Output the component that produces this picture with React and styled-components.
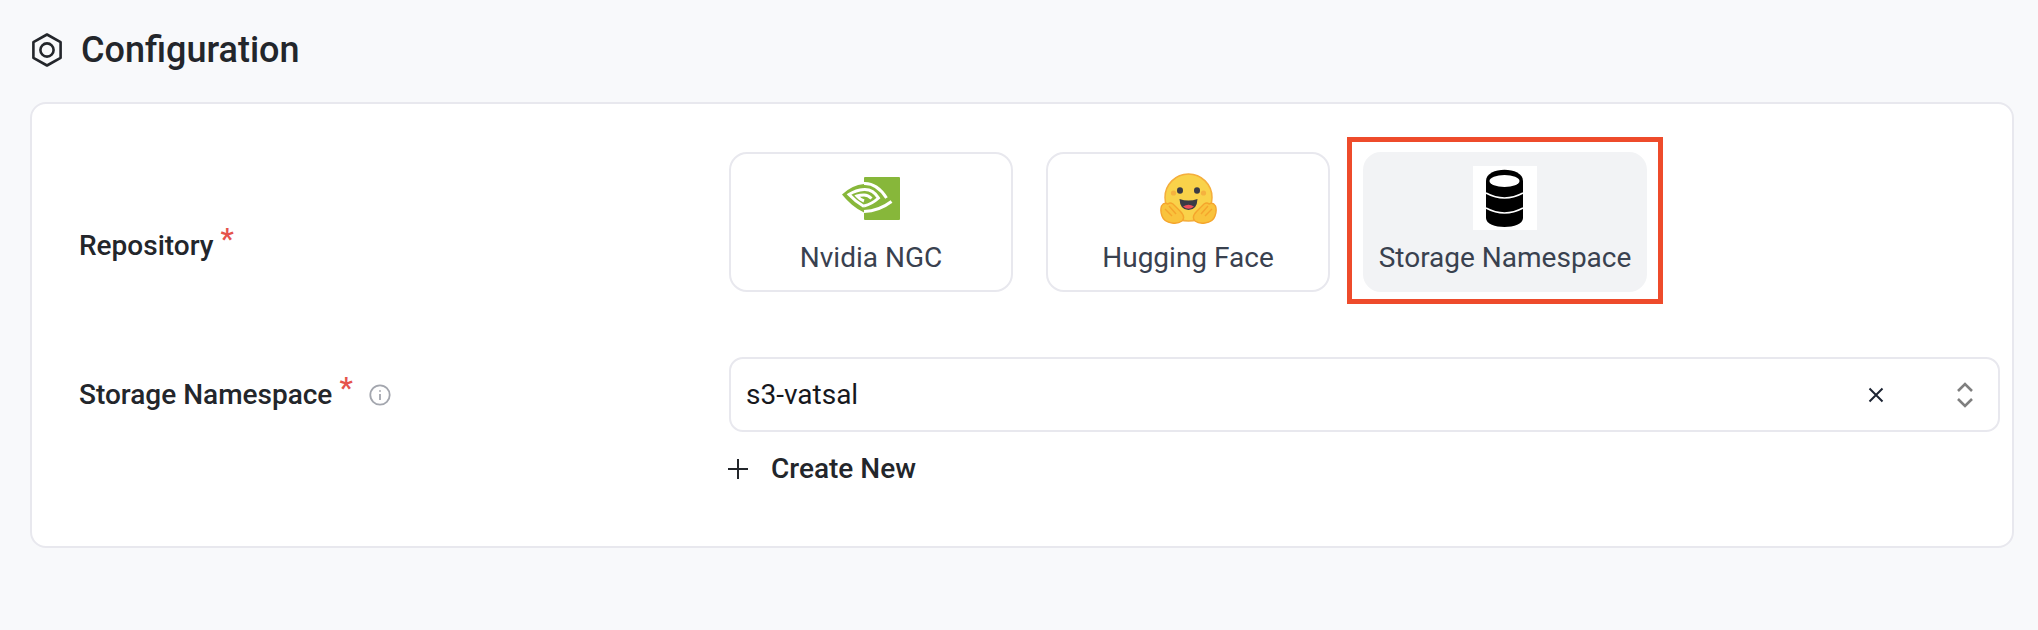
import React from 'react';
import styled, { createGlobalStyle } from 'styled-components';

const GlobalStyle = createGlobalStyle`
  html, body {
    margin: 0;
    padding: 0;
    height: 100%;
    background-color: #f8f9fb;
    font-family: Roboto, "Liberation Sans", sans-serif;
  }
`;

const Page = styled.div`
  height: 630px;
  padding: 28px 0 0 30px;
  box-sizing: border-box;
  background-color: #f8f9fb;
  overflow: hidden;
`;

const Header = styled.div`
  display: flex;
  align-items: center;
  gap: 19px;
  height: 44px;
  margin-left: 2px;
`;

const Title = styled.h1`
  margin: 0;
  font-size: 36px;
  font-weight: 500;
  color: #23262b;
`;

const Card = styled.div`
  width: 1984px;
  height: 446px;
  margin-top: 30px;
  padding: 48px 12px 0 47px;
  box-sizing: border-box;
  background-color: #fff;
  border: 2px solid #e8e8ee;
  border-radius: 16px;
`;

const Row = styled.div`
  display: grid;
  grid-template-columns: 650px 1fr;
`;

const SecondRow = styled(Row)`
  margin-top: 65px;
`;

const Label = styled.div`
  display: flex;
  align-items: center;
  height: 75px;
  margin-top: ${(p) => p.$offset || 0}px;
  font-size: 28px;
  font-weight: 500;
  color: #23262b;
`;

const Star = styled.span`
  margin-left: 7px;
  margin-top: -13px;
  color: #e5534b;
  font-size: 30px;
  line-height: 1;
`;

const InfoIcon = styled.svg`
  margin-left: 16px;
  margin-top: 1px;
`;

const Tiles = styled.div`
  display: flex;
  gap: 33px;
`;

const Tile = styled.div`
  position: relative;
  width: 284px;
  height: 140px;
  box-sizing: border-box;
  display: flex;
  flex-direction: column;
  align-items: center;
  padding-top: 12px;
  border-radius: 18px;
  border: 2px solid ${(p) => (p.$selected ? '#f2f3f5' : '#e8e8ee')};
  background-color: ${(p) => (p.$selected ? '#f2f3f5' : '#fff')};
  font-size: 28px;
  line-height: 33px;
  color: #39414f;
`;

const Highlight = styled.div`
  position: absolute;
  top: -17px;
  left: -18px;
  right: -18px;
  bottom: -14px;
  border: 5px solid #ee4b2b;
`;

const TileIcon = styled.div`
  height: 64px;
  display: flex;
  align-items: center;
  justify-content: center;
  margin-bottom: 11px;
`;

const SelectBox = styled.div`
  display: flex;
  align-items: center;
  height: 75px;
  padding: 0 24px 0 15px;
  box-sizing: border-box;
  border: 2px solid #e8e8ee;
  border-radius: 14px;
  font-size: 28px;
  color: #16181d;
`;

const SelectValue = styled.span`
  flex: 1;
`;

const ClearIcon = styled.svg`
  margin-right: 72px;
`;

const CreateNew = styled.div`
  display: flex;
  align-items: center;
  gap: 22px;
  margin: 20px 0 0 -2px;
  font-size: 28px;
  line-height: 33px;
  font-weight: 500;
  color: #23262b;
`;

const HexIcon = () => (
  <svg width="30" height="34" viewBox="0 0 30 34" fill="none" stroke="#23262b" strokeWidth="2.6">
    <path d="M15 1.5 L28.6 9.2 V24.8 L15 32.5 L1.4 24.8 V9.2 Z" strokeLinejoin="round" />
    <circle cx="15" cy="17" r="6.6" />
  </svg>
);

const NvidiaLogo = () => (
  <svg width="58" height="43" viewBox="0 0 58 43" fill="none">
    <rect x="22" y="0" width="36" height="43" rx="1" fill="#87b73a" />
    <path d="M22 7 Q10 8 0 17.5 Q10 30 22 35.5 Z" fill="#87b73a" />
    <g stroke="#fff" strokeWidth="3">
      <path d="M22 6.5 Q35 6 44.5 21" />
      <path d="M22 34.5 Q37 34 49.5 24.5" />
      <path d="M22 12.5 Q14 13 7 17.5 Q14 25 22 29.5" />
      <path d="M22 12.5 Q31 12 36.5 21 Q30 27 22 29" />
      <path d="M22 18 Q18 18 15 19 Q18 22.5 22 24" />
      <path d="M22 18 Q26 18 29.5 21.5" />
    </g>
  </svg>
);

const HuggingLogo = () => (
  <svg width="57" height="51" viewBox="0 0 57 51">
    <circle cx="28.5" cy="24.5" r="23.5" fill="#f9d24a" stroke="#f5ae3c" strokeWidth="1.5" />
    <circle cx="13.5" cy="20" r="2.6" fill="#f5b23f" />
    <circle cx="43.5" cy="20" r="2.6" fill="#f5b23f" />
    <ellipse cx="20" cy="17.5" rx="3" ry="3.3" fill="#3a3b45" />
    <ellipse cx="37" cy="17.5" rx="3" ry="3.3" fill="#3a3b45" />
    <path d="M19.5 26 Q28.5 29 37.5 26 Q37 37 28.5 37 Q20 37 19.5 26 Z" fill="#3a3b45" />
    <path d="M23 33.5 Q28.5 30 34 33.5 Q28.5 38 23 33.5 Z" fill="#ef4e5a" />
    <path d="M1.5 33 Q4 29 8 31 Q10 29 13 31 L20 38 Q26 44 22 48 Q18 51 12 50 Q4 49 2 43 Q0 38 1.5 33 Z" fill="#f9c33c" stroke="#f5a52c" strokeWidth="1.4" />
    <path d="M55.5 33 Q53 29 49 31 Q47 29 44 31 L37 38 Q31 44 35 48 Q39 51 45 50 Q53 49 55 43 Q57 38 55.5 33 Z" fill="#f9c33c" stroke="#f5a52c" strokeWidth="1.4" />
    <path d="M5 36 L12 43 M9 33 L16 41 M52 36 L45 43 M48 33 L41 41" stroke="#f5a52c" strokeWidth="1.4" />
  </svg>
);

const DatabaseLogo = () => (
  <svg width="64" height="64" viewBox="0 0 64 64">
    <rect width="64" height="64" fill="#fff" />
    <path d="M13 15 C13 0 50 0 50 15 V52 C50 64 13 64 13 52 Z" fill="#000" />
    <ellipse cx="31.5" cy="15" rx="15" ry="6" fill="#fff" />
    <path d="M13 27 Q31.5 37 50 27 M13 42 Q31.5 52 50 42" fill="none" stroke="#fff" strokeWidth="1.6" />
  </svg>
);

const App = () => (
  <Page>
    <GlobalStyle />
    <Header>
      <HexIcon />
      <Title>Configuration</Title>
    </Header>
    <Card>
      <Row>
        <Label $offset={56}>
          Repository<Star>*</Star>
        </Label>
        <Tiles>
          <Tile>
            <TileIcon><NvidiaLogo /></TileIcon>
            Nvidia NGC
          </Tile>
          <Tile>
            <TileIcon><HuggingLogo /></TileIcon>
            Hugging Face
          </Tile>
          <Tile $selected>
            <Highlight />
            <TileIcon><DatabaseLogo /></TileIcon>
            Storage Namespace
          </Tile>
        </Tiles>
      </Row>
      <SecondRow>
        <Label>
          Storage Namespace<Star>*</Star>
          <InfoIcon width="22" height="22" viewBox="0 0 22 22" fill="none" stroke="#a3a6ae" strokeWidth="1.8">
            <circle cx="11" cy="11" r="9.7" />
            <path d="M11 10 V16 M11 6.2 V7.8" />
          </InfoIcon>
        </Label>
        <div>
          <SelectBox>
            <SelectValue>s3-vatsal</SelectValue>
            <ClearIcon width="16" height="16" viewBox="0 0 16 16" stroke="#1d2433" strokeWidth="2" fill="none">
              <path d="M1.5 1.5 L14.5 14.5 M14.5 1.5 L1.5 14.5" />
            </ClearIcon>
            <svg width="18" height="26" viewBox="0 0 18 26" stroke="#7f7f7f" strokeWidth="2.6" fill="none">
              <path d="M2 9 L9 2 L16 9 M2 17 L9 24 L16 17" />
            </svg>
          </SelectBox>
          <CreateNew>
            <svg width="22" height="22" viewBox="0 0 22 22" stroke="#23262b" strokeWidth="2" fill="none">
              <path d="M11 1 V21 M1 11 H21" />
            </svg>
            Create New
          </CreateNew>
        </div>
      </SecondRow>
    </Card>
  </Page>
);

export default App;
